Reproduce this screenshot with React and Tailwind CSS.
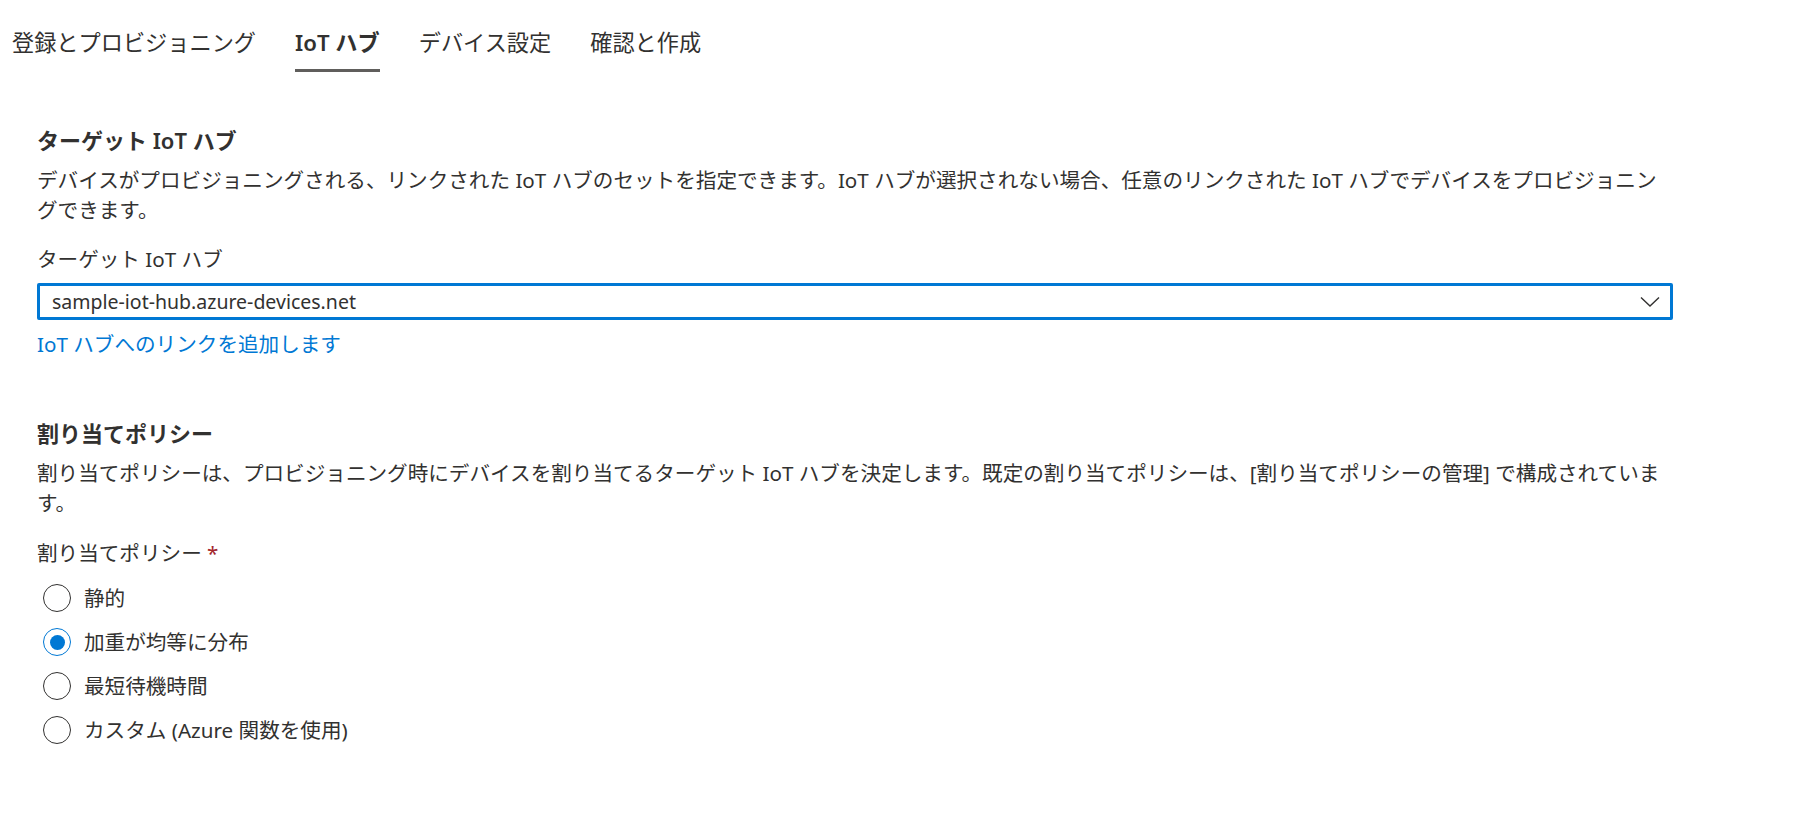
import React, { useState } from 'react';

const tabs = ['登録とプロビジョニング', 'IoT ハブ', 'デバイス設定', '確認と作成'];

const policies = ['静的', '加重が均等に分布', '最短待機時間', 'カスタム (Azure 関数を使用)'];

const Radio = ({ label, checked, onSelect }) => (
  <button type="button" onClick={onSelect} className="flex items-center h-[44px] text-left">
    <span
      className={`w-[28px] h-[28px] rounded-full border-[1.5px] flex items-center justify-center shrink-0 ml-[6px] ${checked ? 'border-[#0078d4]' : 'border-[#323130]'}`}
    >
      {checked && <span className="w-[15px] h-[15px] rounded-full bg-[#0078d4]"></span>}
    </span>
    <span className="ml-[13px] text-[20.6px] leading-[30px] text-[#323130]">{label}</span>
  </button>
);

const App = () => {
  const [activeTab, setActiveTab] = useState(1);
  const [policy, setPolicy] = useState(1);

  return (
    <div className="min-h-screen w-full bg-white text-[#323130] font-['Segoe_UI','Noto_Sans','Noto_Sans_CJK_JP',sans-serif]">
      {/* tabs */}
      <div className="flex gap-[39px] pl-[12px]">
        {tabs.map((t, i) => (
          <button key={t} type="button" onClick={() => setActiveTab(i)} className="flex flex-col pt-[28px]">
            <span className={`text-[22.2px] leading-[30px] whitespace-nowrap ${activeTab === i ? 'font-semibold' : ''}`}>{t}</span>
            <span className={`mt-[11px] h-[3px] w-full ${activeTab === i ? 'bg-[#605e5c]' : 'bg-transparent'}`}></span>
          </button>
        ))}
      </div>

      <div className="pl-[37px] w-[1673px]">
        {/* target hub */}
        <h2 className="mt-[53px] text-[22px] leading-[30px] font-semibold">ターゲット IoT ハブ</h2>
        <p className="mt-[10px] text-[20.6px] leading-[30px]">
          デバイスがプロビジョニングされる、リンクされた IoT ハブのセットを指定できます。IoT ハブが選択されない場合、任意のリンクされた IoT ハブでデバイスをプロビジョニングできます。
        </p>

        <div className="mt-[19px] text-[20.6px] leading-[30px]">ターゲット IoT ハブ</div>
        <div className="mt-[9px] h-[37px] border-[3px] border-[#0078d4] rounded-[2px] flex items-center justify-between pl-[12px] pr-[10px]">
          <span className="text-[19.5px] leading-[30px]">sample-iot-hub.azure-devices.net</span>
          <svg width="20" height="12" viewBox="0 0 20 12" fill="none">
            <polyline points="1,1.5 10,10 19,1.5" stroke="#323130" strokeWidth="1.4" />
          </svg>
        </div>
        <a href="#" className="block mt-[9px] text-[20.6px] leading-[30px] text-[#0078d4]">IoT ハブへのリンクを追加します</a>

        {/* allocation policy */}
        <h2 className="mt-[59px] text-[22px] leading-[30px] font-semibold">割り当てポリシー</h2>
        <p className="mt-[10px] text-[20.6px] leading-[30px]">
          割り当てポリシーは、プロビジョニング時にデバイスを割り当てるターゲット IoT ハブを決定します。既定の割り当てポリシーは、[割り当てポリシーの管理] で構成されています。
        </p>

        <div className="mt-[20px] text-[20.6px] leading-[30px]">
          割り当てポリシー <span className="text-[#a4262c]">*</span>
        </div>
        <div className="mt-[8px] flex flex-col">
          {policies.map((p, i) => (
            <Radio key={p} label={p} checked={policy === i} onSelect={() => setPolicy(i)} />
          ))}
        </div>
      </div>
    </div>
  );
};

export default App;
